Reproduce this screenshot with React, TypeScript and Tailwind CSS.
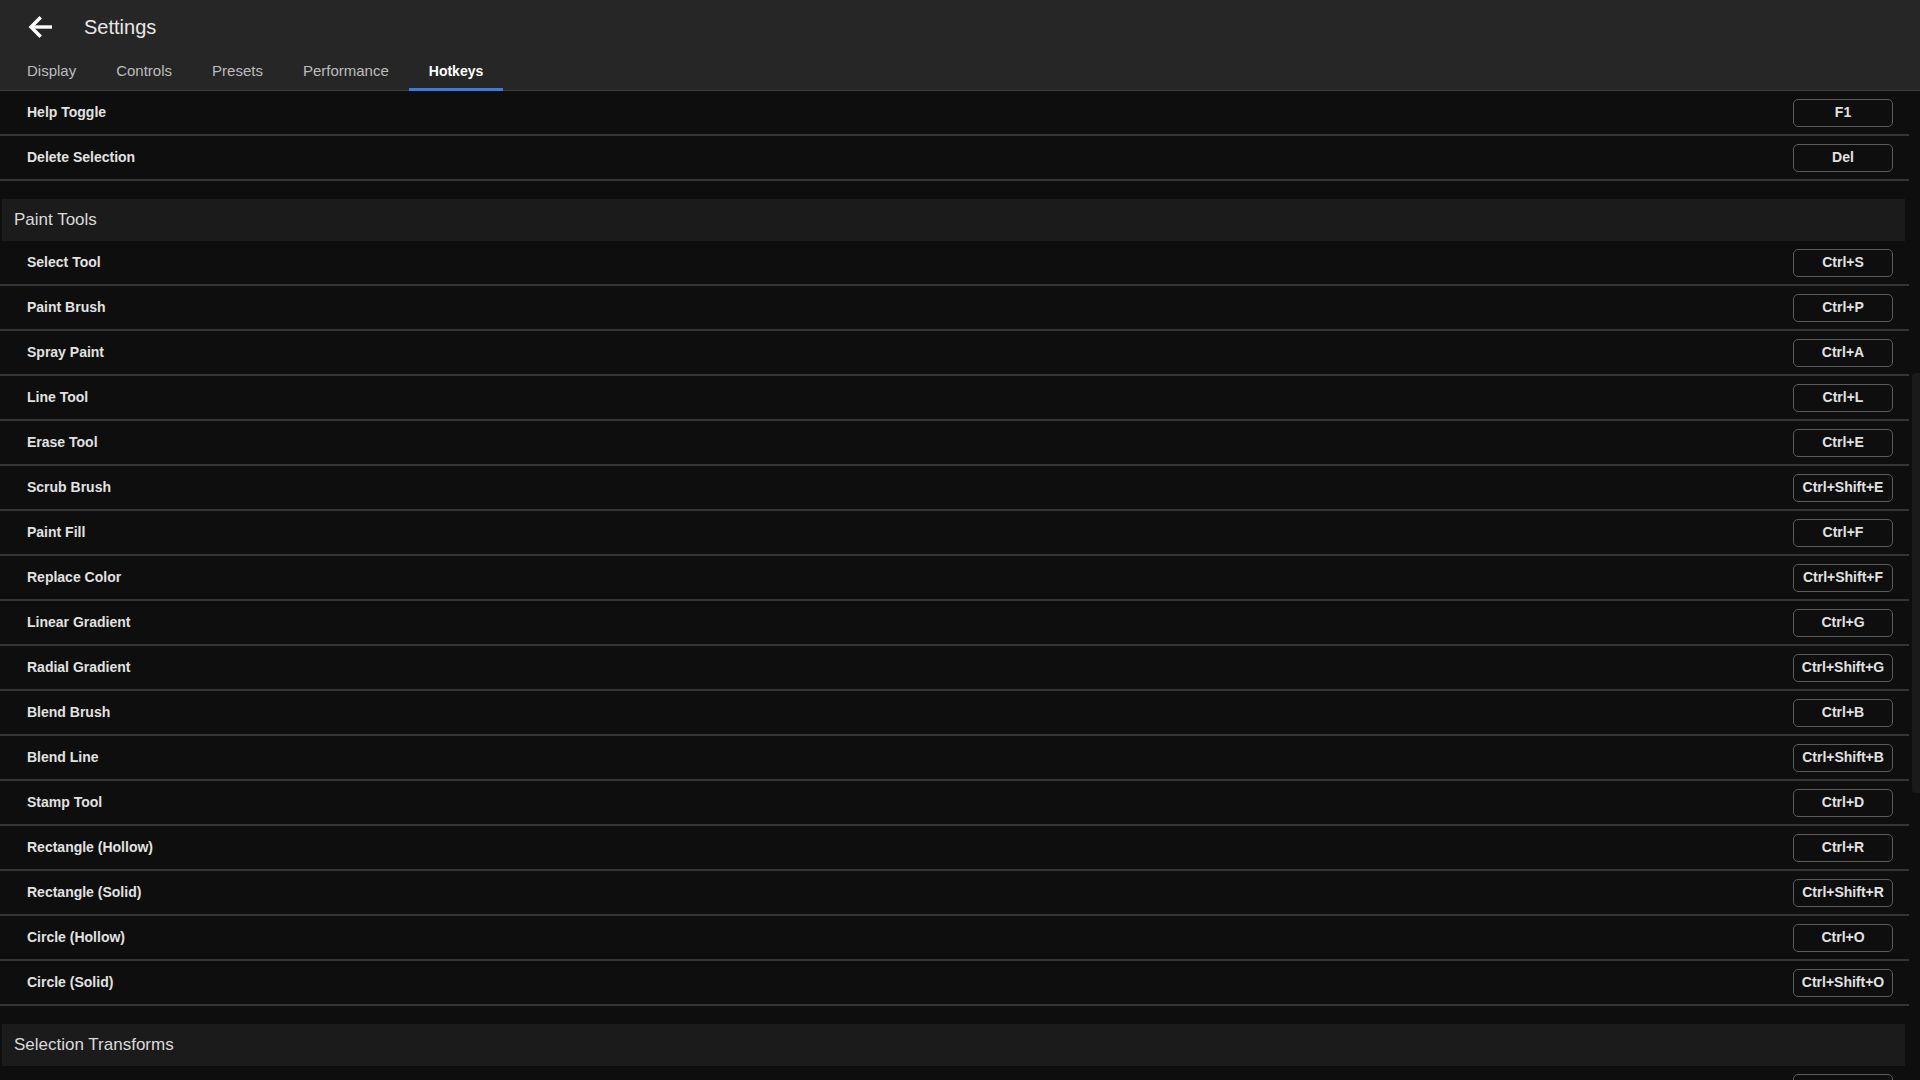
import React from 'react'

type Hotkey = { label: string; keys: string }

const topRows: Hotkey[] = [
  { label: 'Help Toggle', keys: 'F1' },
  { label: 'Delete Selection', keys: 'Del' },
]

const paintTools: Hotkey[] = [
  { label: 'Select Tool', keys: 'Ctrl+S' },
  { label: 'Paint Brush', keys: 'Ctrl+P' },
  { label: 'Spray Paint', keys: 'Ctrl+A' },
  { label: 'Line Tool', keys: 'Ctrl+L' },
  { label: 'Erase Tool', keys: 'Ctrl+E' },
  { label: 'Scrub Brush', keys: 'Ctrl+Shift+E' },
  { label: 'Paint Fill', keys: 'Ctrl+F' },
  { label: 'Replace Color', keys: 'Ctrl+Shift+F' },
  { label: 'Linear Gradient', keys: 'Ctrl+G' },
  { label: 'Radial Gradient', keys: 'Ctrl+Shift+G' },
  { label: 'Blend Brush', keys: 'Ctrl+B' },
  { label: 'Blend Line', keys: 'Ctrl+Shift+B' },
  { label: 'Stamp Tool', keys: 'Ctrl+D' },
  { label: 'Rectangle (Hollow)', keys: 'Ctrl+R' },
  { label: 'Rectangle (Solid)', keys: 'Ctrl+Shift+R' },
  { label: 'Circle (Hollow)', keys: 'Ctrl+O' },
  { label: 'Circle (Solid)', keys: 'Ctrl+Shift+O' },
]

const selectionTransforms: Hotkey[] = [
  { label: 'Flip Horizontal', keys: 'Ctrl+H' },
  { label: 'Flip Vertical', keys: 'Ctrl+Shift+H' },
  { label: 'Rotate Clockwise', keys: 'Ctrl+]' },
]

const tabs = ['Display', 'Controls', 'Presets', 'Performance', 'Hotkeys']

function HotkeyRow({ item }: { item: Hotkey }) {
  return (
    <div className="flex h-[45px] shrink-0 items-center justify-between border-b-2 border-[#353535] pl-[27px] pr-4">
      <span className="text-[14px] font-bold text-[#e2e2e2]">{item.label}</span>
      <span className="flex h-[28px] w-[100px] items-center justify-center rounded-[5px] border-[1.5px] border-[#5a5a5a] text-[14px] font-bold text-[#e2e2e2]">
        {item.keys}
      </span>
    </div>
  )
}

function Section({ title, items }: { title: string; items: Hotkey[] }) {
  return (
    <div className="flex flex-col pt-[18px]">
      <div className="ml-[2px] mr-[4px] flex h-[42px] items-center bg-[#1b1b1b] pl-3 text-[17px] text-[#dadada]">
        {title}
      </div>
      {items.map((item) => (
        <HotkeyRow key={item.label} item={item} />
      ))}
    </div>
  )
}

export default function App() {
  return (
    <div
      className="flex h-screen flex-col overflow-hidden bg-[#0e0e0e]"
      style={{ fontFamily: '"Liberation Sans", Arial, sans-serif' }}
    >
      {/* Header */}
      <header className="shrink-0 bg-[#262626]">
        <div className="flex h-[54px] items-center pl-[27px]">
          <svg width="26" height="22" viewBox="0 0 26 22" fill="none" className="text-white">
            <path d="M25 11H4" stroke="currentColor" strokeWidth="3.4" />
            <path d="M12.5 2.5L4 11l8.5 8.5" stroke="currentColor" strokeWidth="3.4" strokeLinecap="square" />
          </svg>
          <span className="ml-[31px] text-[20px] text-[#e8e8e8]">Settings</span>
        </div>
        <nav className="flex h-[37px] border-b border-[#3c3c3c] pl-[7px]">
          {tabs.map((tab) => (
            <div
              key={tab}
              className={
                tab === 'Hotkeys'
                  ? 'flex h-[37px] items-center border-b-[3px] border-[#3b7ddd] px-5 pt-[1px] text-[14px] font-bold text-white'
                  : 'flex h-[37px] items-center border-b-[3px] border-transparent px-5 pt-[1px] text-[15px] text-[#bdbdbd]'
              }
            >
              {tab}
            </div>
          ))}
        </nav>
      </header>

      {/* Scroll area */}
      <div className="flex min-h-0 flex-1">
        <div className="flex min-w-0 flex-1 flex-col">
          {topRows.map((item) => (
            <HotkeyRow key={item.label} item={item} />
          ))}
          <Section title="Paint Tools" items={paintTools} />
          <Section title="Selection Transforms" items={selectionTransforms} />
        </div>
        <div className="w-[11px] shrink-0 pl-[3px]">
          <div className="mt-[282px] h-[420px] rounded-l-[4px] bg-[#1a1a1a]" />
        </div>
      </div>
    </div>
  )
}
